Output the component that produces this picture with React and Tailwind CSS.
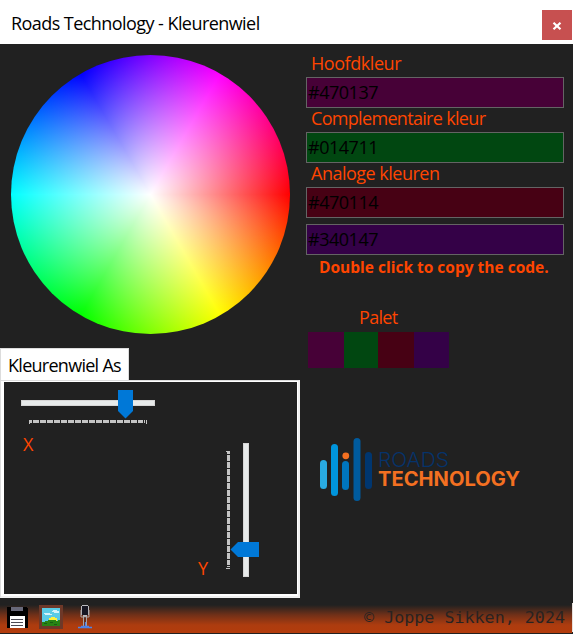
import React from "react";

const UI = "font-['Open_Sans','Noto_Sans',sans-serif]";

function Title() {
  return (
    <header className="flex h-11 shrink-0 items-start justify-between bg-white pl-[11px] pr-px">
      <h1 className="mt-[9px] whitespace-nowrap text-[18px] leading-7 tracking-[-0.56px] text-black">Roads Technology - Kleurenwiel</h1>
      <button className="mt-[10px] flex h-[30px] w-[30px] items-center justify-center bg-[#c75050]" aria-label="Close">
        <svg width="10" height="8" viewBox="0 0 10 8" className="mt-px">
          <path d="M1.5 .8L8.5 7.2M8.5 .8L1.5 7.2" stroke="#fff" strokeWidth="2.2" />
        </svg>
      </button>
    </header>
  );
}

function Wheel() {
  return (
    <div className="ml-[11px] mt-[11px] h-[279px] w-[279px] shrink-0 rounded-full bg-[radial-gradient(circle_closest-side,#fff,rgba(255,255,255,0)),conic-gradient(from_90deg,#f00,#ff0,#0f0,#0ff,#00f,#f0f,#f00)]" />
  );
}

function HorizontalSlider() {
  return (
    <svg className="block" width="140" height="34" viewBox="0 0 140 34" shapeRendering="crispEdges">
      <rect x="0.5" y="10.5" width="133" height="5" fill="#e7eaea" stroke="#d6d6d6" />
      <rect x="8" y="30" width="3" height="3" fill="#c4c4c4" />
      <rect x="8" y="30" width="1" height="4" fill="#c4c4c4" />
      <path d="M12 31.5H122" stroke="#c4c4c4" strokeWidth="3" strokeDasharray="6 1" />
      <path d="M123.500 30V33M125.500 30V34" stroke="#c4c4c4" />
      <path d="M97 0H112V21L104.500 28.500L97 21Z" fill="#0078d7" shapeRendering="auto" />
    </svg>
  );
}

function VerticalSlider() {
  return (
    <svg className="block" width="34" height="134" viewBox="0 0 34 134" shapeRendering="crispEdges">
      <rect x="17.500" y="0.500" width="5" height="133" fill="#e7eaea" stroke="#d6d6d6" />
      <rect x="0" y="8" width="4" height="1" fill="#c4c4c4" />
      <rect x="1" y="8" width="3" height="3" fill="#c4c4c4" />
      <path d="M2.500 12V122" stroke="#c4c4c4" strokeWidth="3" strokeDasharray="6 1" />
      <path d="M1 123.500H4M0 125.500H4" stroke="#c4c4c4" />
      <path d="M33 99V114H12L4.500 106.500L12 99Z" fill="#0078d7" shapeRendering="auto" />
    </svg>
  );
}

function AxisPanel() {
  return (
    <section className="mt-[14px]">
      <div className="h-8 w-[129px] border-l border-t border-r border-[#dcdcdc] bg-white pl-[7px] pt-[2px] text-[18px] leading-7 tracking-[-0.72px] whitespace-nowrap text-black">Kleurenwiel As</div>
      <div className="h-[218px] w-[300px] border border-[#dcdcdc] border-r-2 border-r-[#f0f0f0] border-b-2 border-b-[#f0f0f0] bg-white pl-[3px] pt-px pr-px pb-[2px]">
        <div className="flex h-full w-full bg-[#212121]">
          <div className="w-[190px] pl-[17px] pt-2">
            <HorizontalSlider />
            <div className="mt-[6px] pl-[2px] text-[18px] leading-7 text-[#ff4500]">X</div>
          </div>
          <div className="flex pt-[61px]">
            <div className="mt-[111px] w-8 pl-1 text-[18px] leading-7 text-[#ff4500]">Y</div>
            <VerticalSlider />
          </div>
        </div>
      </div>
    </section>
  );
}

function Label({ children, className }) {
  return <div className={"h-6 pl-[5px] text-[18px] whitespace-nowrap text-[#ff4500] " + className}>{children}</div>;
}

function ColorField({ value, className }) {
  return <div className={"h-[31px] w-[258px] border border-[#646464] pl-px text-[18px] leading-[29px] tracking-[-0.48px] text-black " + className}>{value}</div>;
}

function Logo() {
  return (
    <svg className="mt-[68px] ml-[10px]" width="210" height="68" viewBox="0 0 210 68" aria-label="Roads Technology">
      <rect x="4" y="24" width="7" height="29" rx="3.500" fill="#29abe2" />
      <rect x="15" y="8" width="7" height="52" rx="3.500" fill="#0095dc" />
      <rect x="26" y="25" width="7" height="29" rx="3.500" fill="#0075bd" />
      <circle cx="29.800" cy="19.800" r="3.400" fill="#f37021" />
      <rect x="37.500" y="2" width="7" height="63" rx="3.500" fill="#005b9e" />
      <rect x="49" y="16" width="7" height="37" rx="3.500" fill="#003670" />
      <text x="62" y="30.500" fontSize="19.500" fontFamily="Inter, sans-serif" fontWeight="300" fill="#06336a" textLength="71" lengthAdjust="spacingAndGlyphs">ROADS</text>
      <text x="62" y="50" fontSize="19.500" fontFamily="Inter, sans-serif" fontWeight="700" fill="#f37021" textLength="142" lengthAdjust="spacingAndGlyphs">TECHNOLOGY</text>
    </svg>
  );
}

function ColorPanel() {
  return (
    <section className="flex w-[273px] flex-col pl-[6px] pt-[7px]">
      <Label className="mb-[2px] leading-6 tracking-[-0.44px]">Hoofdkleur</Label>
      <ColorField value="#470137" className="bg-[#470137]" />
      <Label className="leading-5 tracking-[-0.68px]">Complementaire kleur</Label>
      <ColorField value="#014711" className="bg-[#014711]" />
      <Label className="leading-5 tracking-[-0.5px]">Analoge kleuren</Label>
      <ColorField value="#470114" className="bg-[#470114]" />
      <ColorField value="#340147" className="mt-[6px] bg-[#340147]" />
      <div className="h-6 pl-[13px] text-[15.500px] font-bold leading-6 whitespace-nowrap text-[#ff4500]">Double click to copy the code.</div>
      <div className="mt-[26px] w-[142px] pl-[53px] text-[18px] leading-6 tracking-[-0.7px] text-[#ff4500]">Palet</div>
      <div className="ml-[2px] mt-[3px] flex h-9">
        <div className="w-9 bg-[#470137]" />
        <div className="w-[34px] bg-[#014711]" />
        <div className="w-9 bg-[#470114]" />
        <div className="w-[35px] bg-[#340147]" />
      </div>
      <Logo />
    </section>
  );
}

function SaveIcon() {
  return (
    <svg width="21" height="21" viewBox="0 0 21 21" shapeRendering="crispEdges">
      <path d="M0 0H19L21 2V21H0Z" fill="#000" />
      <rect x="4" width="12" height="4" fill="#686879" />
      <rect x="3" y="9" width="15" height="12" fill="#fff" />
      <path d="M4 12.500H16M4 15.500H16M4 18.500H16" stroke="#4b4b55" />
    </svg>
  );
}

function PictureIcon() {
  return (
    <svg width="24" height="24" viewBox="0 0 24 24" shapeRendering="crispEdges">
      <rect width="24" height="24" fill="#6e3828" />
      <rect x="3" y="3" width="18" height="18" fill="#5acbe4" />
      <path d="M14 5H18V6H20V8H15V7H13V6H14ZM7 8H11V9H13V10H6V9H5V8Z" fill="#d5f2f7" />
      <path d="M10 16V13H12V12H16V13H18V16Z" fill="#fff23c" />
      <path d="M3 17H6V16H9V15H17V16H19V15H21V21H3Z" fill="#278314" />
      <path d="M5 18H8M11 17H14M15 19H18" stroke="#175d12" />
    </svg>
  );
}

function MicIcon() {
  return (
    <svg width="14" height="24" viewBox="0 0 14 24">
      <path d="M4 0H10V1H11V10H9V12H5V10H3V1H4Z" fill="#b9b9bd" />
      <rect x="4" y="1" width="6" height="9" fill="#171723" />
      <path d="M3 5V12H11V5M5.500 12V21M8.500 12V21" fill="none" stroke="#aaa5a5" />
      <path d="M7 12V22" stroke="#3c2424" />
      <path d="M0 22.500H14M3 21.500H11M7.500 17V22" stroke="#4f83e8" strokeWidth="1.300" />
    </svg>
  );
}

export default function App() {
  return (
    <main className={"flex h-[634px] w-[573px] flex-col overflow-hidden bg-[#212121] " + UI}>
      <Title />
      <div className="flex h-[554px] shrink-0">
        <div className="flex w-[300px] flex-col">
          <Wheel />
          <AxisPanel />
        </div>
        <ColorPanel />
      </div>
      <div className="flex h-9 shrink-0">
        <footer className="flex h-[35px] w-[572px] items-start bg-[linear-gradient(to_bottom,#212121_0px,#212121_7px,#713018_17px,#ad3c0f_27px,#b33c0c_35px)] pl-[7px]">
          <div className="mt-[9px]"><SaveIcon /></div>
          <div className="ml-[11px] mt-[7px]"><PictureIcon /></div>
          <div className="ml-[15px] mt-[7px]"><MicIcon /></div>
          <div className="ml-auto mr-[7px] mt-[7px] whitespace-pre font-['DejaVu_Sans_Mono',monospace] text-[16.700px] leading-6 text-[#292321]">© Joppe Sikken, 2024</div>
        </footer>
        <div className="mt-[5px] h-[29px] w-px bg-[#e8e0dc]" />
      </div>
    </main>
  );
}
